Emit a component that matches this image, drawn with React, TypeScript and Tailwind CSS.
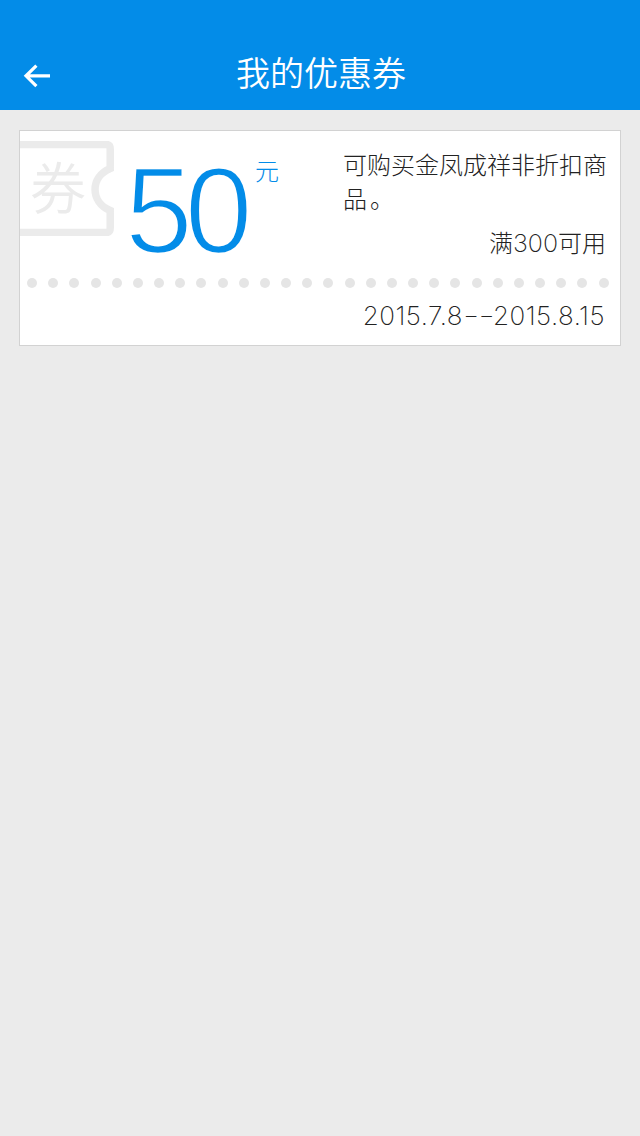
const DOT_COUNT = 28;

function BackArrow() {
  return (
    <svg className="block h-6 w-7" viewBox="0 0 28 24" fill="none" stroke="#fff" strokeWidth="3.2">
      <path d="M27 11.8H3M13.4 1.6L3 11.8L13.4 22.2" />
    </svg>
  );
}

function TicketOutline() {
  return (
    <svg className="absolute inset-0 h-full w-full" viewBox="0 0 94 95" fill="none" stroke="#ebebeb" strokeWidth="7.5">
      <path d="M0 3.5H86Q90.2 3.5 90.2 8V27.5C70 36 70 61 90.2 69.5V87Q90.2 91.5 86 91.5H0" />
    </svg>
  );
}

export default function App() {
  return (
    <div className="flex h-[1136px] w-[640px] flex-col overflow-hidden bg-[#ebebeb] font-['Noto_Sans_CJK_SC',sans-serif]">
      <header className="grid h-[110px] shrink-0 grid-cols-[1fr_auto_1fr] bg-[#038ce8] pt-[36px] text-white">
        <button className="flex h-[80px] items-center self-center pl-[23px]" aria-label="返回">
          <BackArrow />
        </button>
        <h1 className="mb-[8px] self-center pl-[2px] text-[34px] leading-[50px] font-[350]">我的优惠券</h1>
      </header>

      <main className="px-[19px] pt-[20px]">
        <section className="flex h-[216px] w-[602px] flex-col border border-[#d2d2d2] bg-white">
          <div className="flex h-[147px] shrink-0">
            <div className="relative mt-[10px] flex h-[95px] w-[94px] shrink-0 pt-[4px] pl-[10px] text-[56px] leading-[80px] font-[350] text-[#ebebeb]">
              <TicketOutline />
              <span>券</span>
            </div>
            <div className="flex w-[150px] shrink-0 pt-[20px] pl-[11px] text-[#038ce8]">
              <span className="w-[130px] shrink-0 font-['Liberation_Sans',sans-serif] text-[122px] leading-[120px] tracking-[-8px] [-webkit-text-stroke:2.6px_white]">50</span>
              <span className="pt-[1px] text-[24px] leading-[36px] font-light">元</span>
            </div>
            <div className="ml-[79px] w-[266px] pt-[16px] text-[24px] leading-[34px] font-extralight text-[#222]">
              <p>可购买金凤成祥非折扣商</p>
              <p className="flex gap-[3px]">
                <span>品</span>
                <span>。</span>
              </p>
              <p className="mt-[10px] pr-[3px] text-right">
                满<span className="font-['Inter',sans-serif] text-[25px]">300</span>可用
              </p>
            </div>
          </div>
          <div className="flex h-[10px] justify-between pr-[11px] pl-[7px]">
            {Array.from({ length: DOT_COUNT }, (_, i) => (
              <i key={i} className="block h-[10px] w-[10px] rounded-full bg-[#e5e5e5]" />
            ))}
          </div>
          <p className="mt-[11px] flex justify-end pr-[15px] font-['Inter',sans-serif] text-[26px] leading-[34px] font-extralight tracking-[0.5px] whitespace-nowrap text-[#222]">
            <span>2015.7.8</span>
            <span className="mr-[10px] block w-[20px] origin-left scale-x-[1.4] tracking-[-0.5px]">--</span>
            <span>2015.8.15</span>
          </p>
        </section>
      </main>
    </div>
  );
}
